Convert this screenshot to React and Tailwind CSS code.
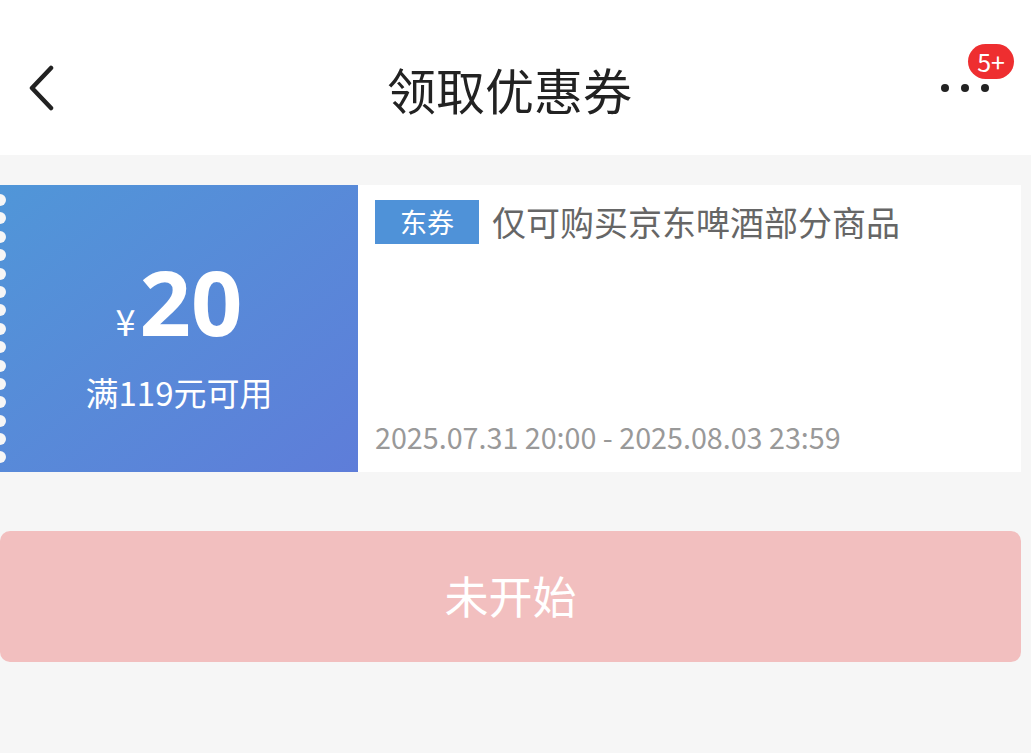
import React from "react";

const font = { fontFamily: '"Noto Sans CJK SC", "Noto Sans", sans-serif' };

const Scallops = () => (
  <div className="absolute left-[-6px] top-[9px] flex flex-col gap-[6.4px]">
    {Array.from({ length: 15 }).map((_, i) => (
      <div key={i} className="w-3 h-3 rounded-full bg-[#f6f6f6]" />
    ))}
  </div>
);

const App = () => {
  return (
    <div className="min-h-[753px] bg-[#f6f6f6]" style={font}>
      {/* Header */}
      <header className="relative h-[155px] bg-white flex items-center justify-between px-7 pt-[20px]">
        <button className="w-[60px] h-[60px] flex items-center">
          <svg width="28" height="46" viewBox="0 0 28 46" fill="none">
            <path d="M23 3L4 23L23 43" stroke="#222" strokeWidth="4.5" strokeLinecap="round" strokeLinejoin="round" />
          </svg>
        </button>
        <h1 className="absolute left-0 right-[12px] top-[64px] text-center text-[49px] text-[#222] leading-none">领取优惠券</h1>
        <div className="relative w-[60px] h-[60px] flex items-center justify-end">
          <div className="flex gap-[12px] mr-[14px]">
            <span className="w-2 h-2 rounded-full bg-[#222]" />
            <span className="w-2 h-2 rounded-full bg-[#222]" />
            <span className="w-2 h-2 rounded-full bg-[#222]" />
          </div>
          <span className="absolute right-[-11px] top-[-14px] h-[35px] px-[9px] rounded-full bg-[#ee2e30] text-white text-[25px] leading-[35px]">
            5+
          </span>
        </div>
      </header>

      <div className="pt-[30px] pr-[10px]">
        {/* Coupon */}
        <div className="flex h-[287px] bg-white">
          <div className="relative w-[358px] overflow-hidden bg-linear-to-br from-[#5096d8] to-[#5e7dd9] flex flex-col items-center justify-center text-white">
            <Scallops />
            <div className="flex items-baseline mt-[8px]">
              <span className="text-[36px] leading-none mr-[4px]">¥</span>
              <span className="text-[90px] font-bold leading-none" style={{ fontFamily: '"Noto Sans", Inter, sans-serif' }}>20</span>
            </div>
            <div className="text-[33px] leading-none mt-[30px]">满119元可用</div>
          </div>
          <div className="flex-1 flex flex-col justify-between pl-[17px] pt-[15px] pb-[20px]">
            <div className="flex items-center">
              <span className="w-[104px] h-[44px] bg-[#4f92d8] text-white text-[27px] leading-[44px] text-center">东券</span>
              <span className="ml-[13px] text-[34px] text-[#666] leading-none">仅可购买京东啤酒部分商品</span>
            </div>
            <div className="text-[28.7px] text-[#999] leading-none">2025.07.31 20:00 - 2025.08.03 23:59</div>
          </div>
        </div>

        {/* Button */}
        <button className="mt-[59px] w-full h-[131px] rounded-[10px] bg-[#f2bfbf] text-white text-[44px] leading-none pb-[4px]">
          未开始
        </button>
      </div>
    </div>
  );
};

export default App;
